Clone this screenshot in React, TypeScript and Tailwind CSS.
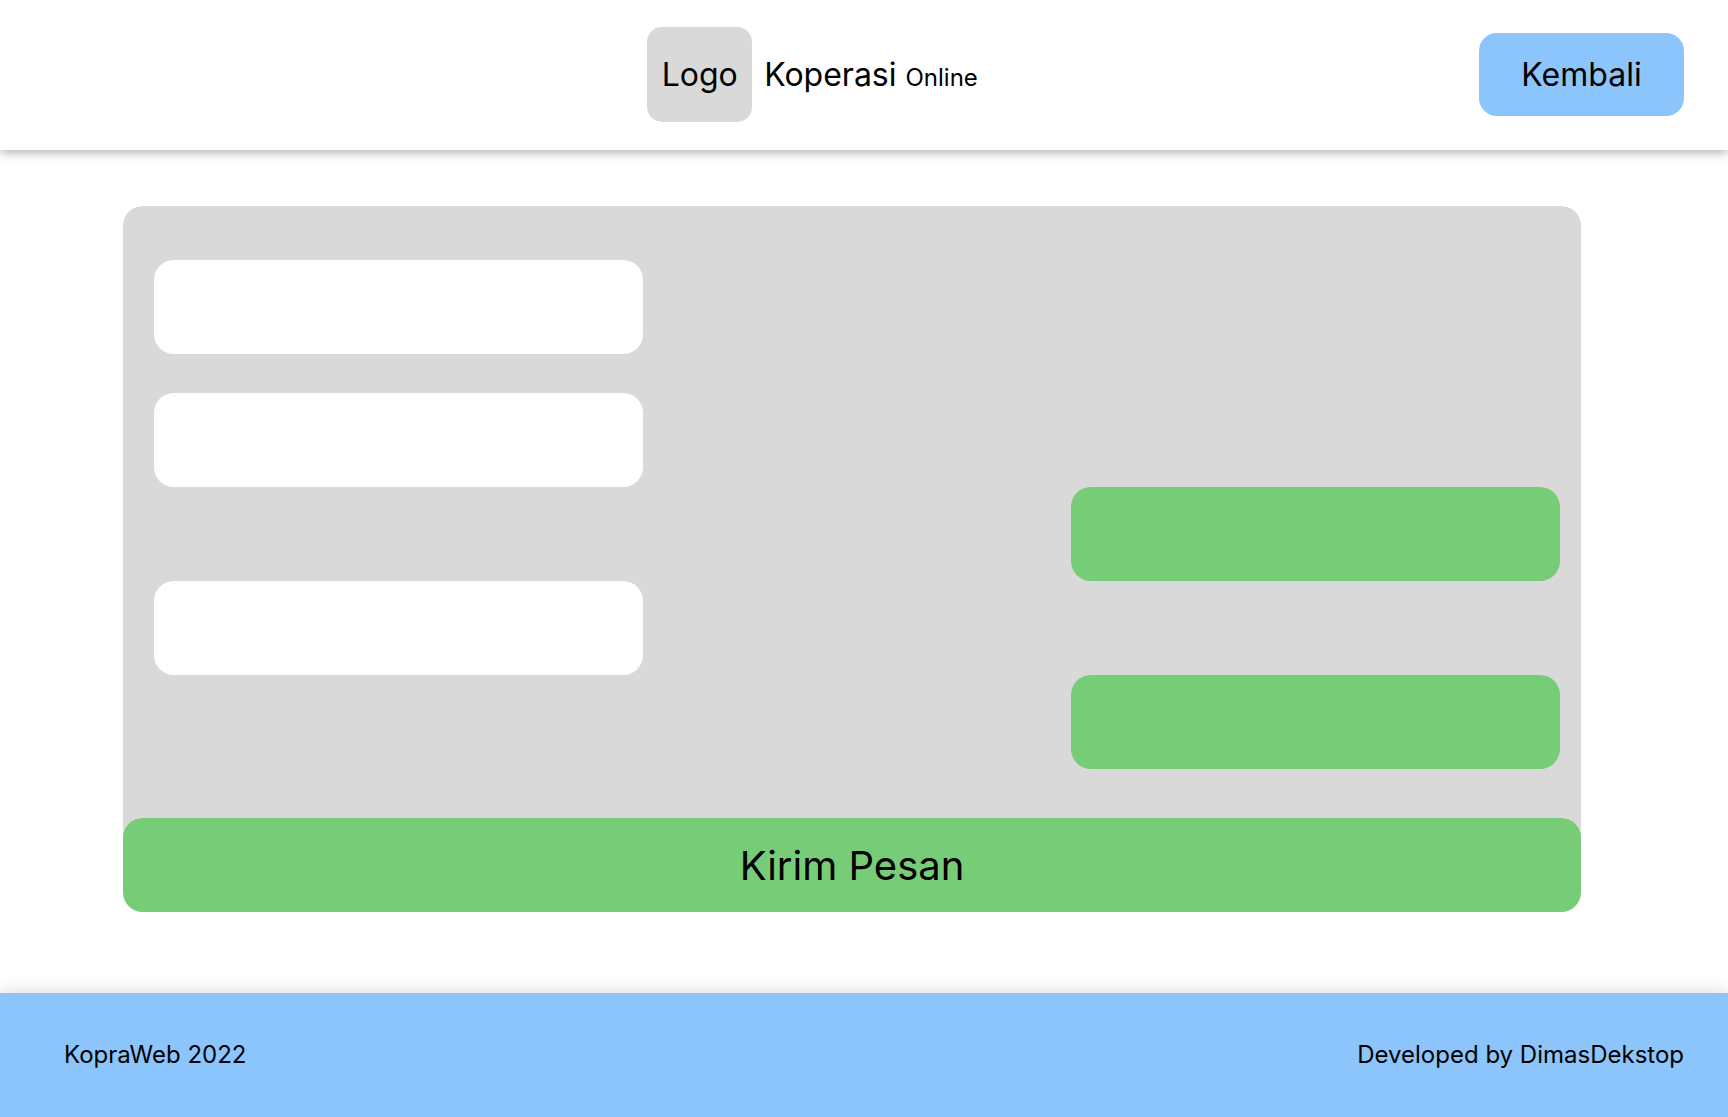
type Message = { id: number; from: "them" | "me"; spacing: string };

const messages: Message[] = [
  { id: 1, from: "them", spacing: "" },
  { id: 2, from: "them", spacing: "mt-[39px]" },
  { id: 3, from: "me", spacing: "" },
  { id: 4, from: "them", spacing: "" },
  { id: 5, from: "me", spacing: "" },
];

function Header() {
  return (
    <header className="flex items-center bg-white pt-[27px] pr-11 pb-7 pl-[146px] shadow-[0_4px_8px_rgba(0,0,0,0.25)]">
      <div className="flex flex-1 items-center justify-center">
        <div className="flex h-[95px] w-[105px] items-center justify-center rounded-[15px] bg-[#d9d9d9] text-[32px]">
          Logo
        </div>
        <h1 className="ml-3 text-[32px]">
          Koperasi <span className="text-2xl">Online</span>
        </h1>
      </div>
      <button
        type="button"
        className="h-[83px] w-[205px] rounded-[18px] bg-[#8cc5fb] text-[32px]"
      >
        Kembali
      </button>
    </header>
  );
}

function Chat() {
  return (
    <section className="flex flex-col rounded-[20px] bg-[#d9d9d9]">
      <ul className="flex flex-col pt-[54px] pr-[21px] pb-[49px] pl-[31px]">
        {messages.map((m) => (
          <li
            key={m.id}
            className={`h-[94px] w-[489px] max-w-full rounded-[20px] ${
              m.from === "me" ? "self-end bg-[#77cd77]" : "bg-white"
            } ${m.spacing}`}
          />
        ))}
      </ul>
      <button
        type="button"
        className="h-[94px] rounded-[20px] bg-[#77cd77] pt-0.5 text-[40px]"
      >
        Kirim Pesan
      </button>
    </section>
  );
}

function Footer() {
  return (
    <footer className="flex items-center justify-between bg-[#8cc5fb] py-11 pr-11 pl-16 text-2xl leading-9 shadow-[0_4px_20px_rgba(0,0,0,0.25)]">
      <p>KopraWeb 2022</p>
      <p>Developed by DimasDekstop</p>
    </footer>
  );
}

export default function App() {
  return (
    <div className="flex min-h-screen flex-col bg-white font-[Inter,sans-serif] text-black">
      <Header />
      <main className="flex-1 pt-14 pr-[147px] pb-[81px] pl-[123px]">
        <Chat />
      </main>
      <Footer />
    </div>
  );
}
